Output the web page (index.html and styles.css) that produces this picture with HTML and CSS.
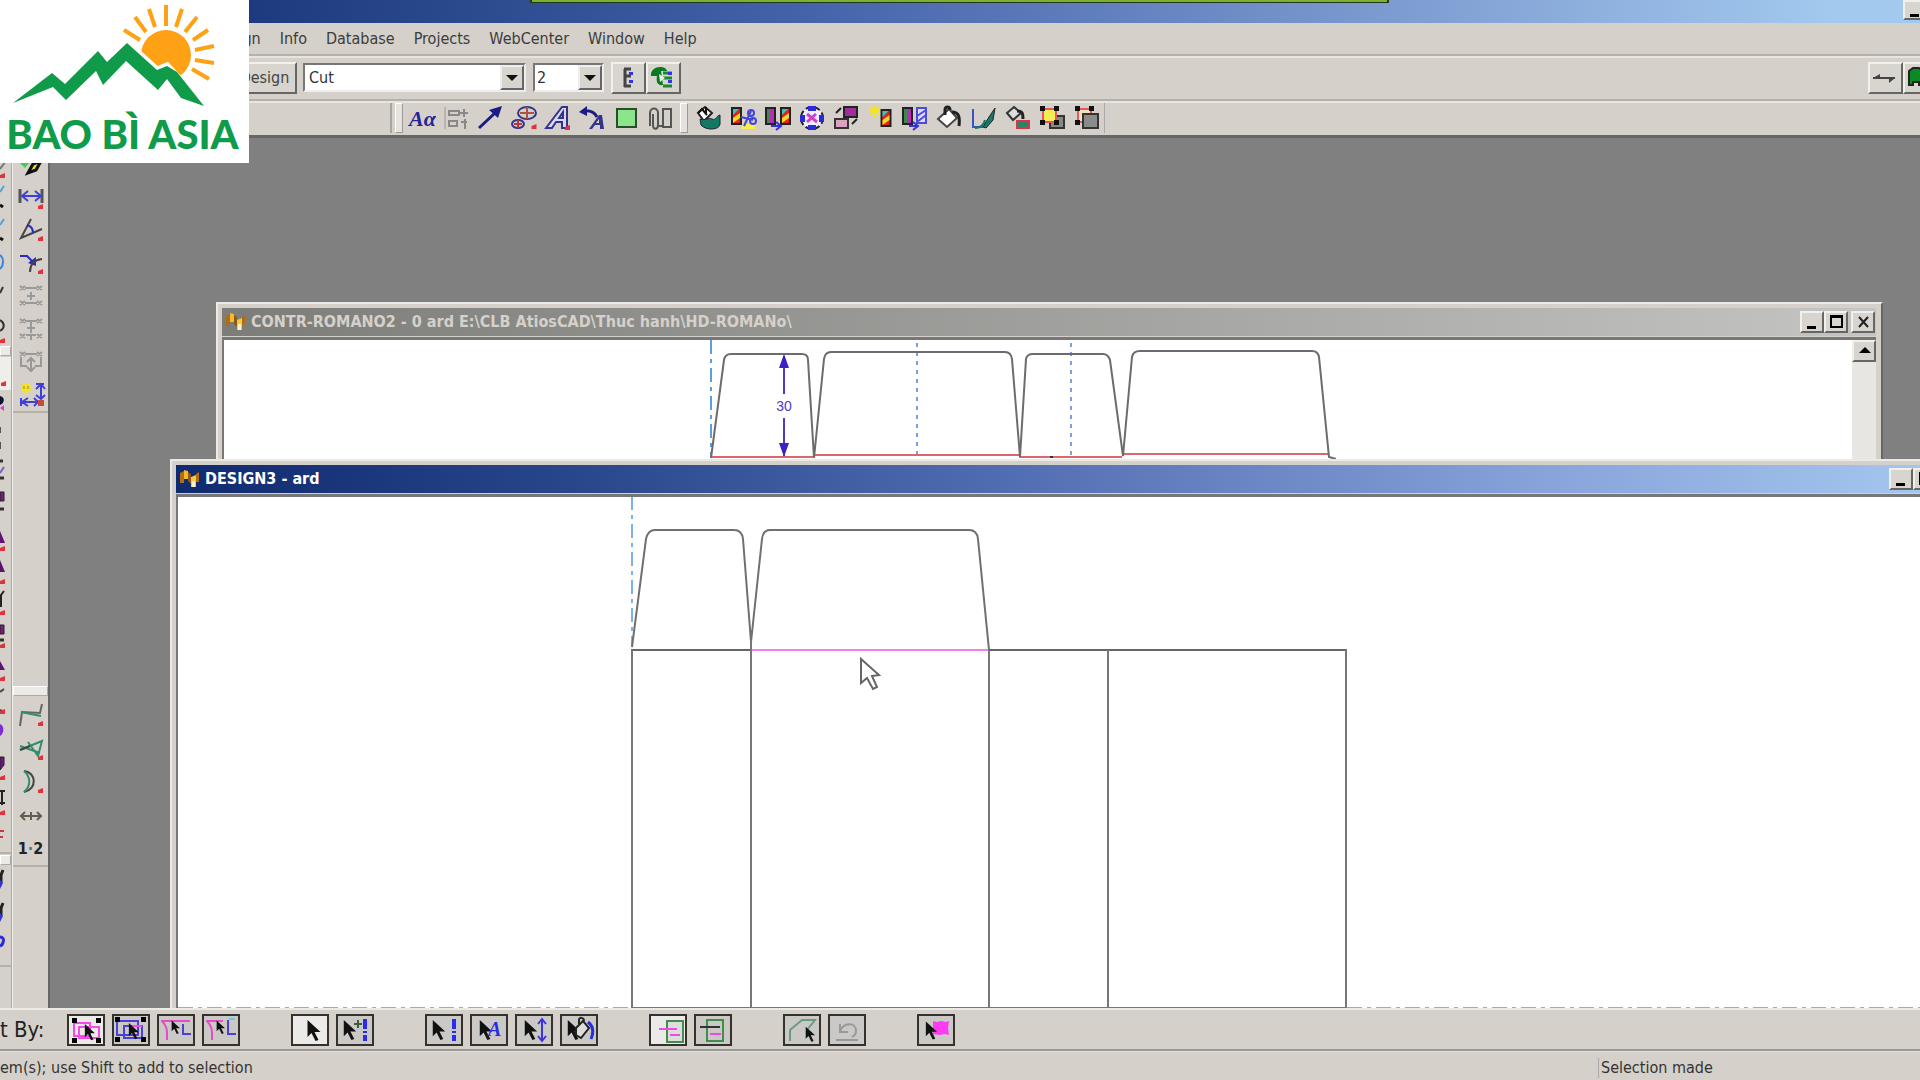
FILE: index.html
```html
<!DOCTYPE html>
<html lang="en">
<head>
<meta charset="utf-8">
<title>DESIGN3 - ard</title>
<link rel="stylesheet" href="styles.css">
</head>
<body>
<svg class="defs" aria-hidden="true">
  <symbol id="cur" viewBox="0 0 14 22"><path d="M1 0v17l4-4 4 8 3-1-4-8h6z" fill="#111"/></symbol>
  <symbol id="mark" viewBox="0 0 20 20"><path d="M0 4l4-2v12H0zM16 5l3-2v10h-3z" fill="#b06e14"/><path d="M4 1l4 1v8H4z" fill="#f5b92c"/><path d="M8 3l3 2v10l-3-3z" fill="#8a5a1c"/><path d="M11 8l5-2v12h-5z" fill="#f8c744"/><path d="M12 12h3v6h-3z" fill="#fff0c0"/></symbol>
  <symbol id="dot" viewBox="0 0 5 5"><path d="M5 0v5H0V2z" fill="#e0343c"/></symbol>
  <symbol id="card" viewBox="0 0 11 18"><path d="M1 1h9v16H1z" fill="#e2231a" stroke="#222" stroke-width="2"/><path d="M2 2h6L2 8z" fill="#35c3c3"/><path d="M9 6v5l-7 5v-5z" fill="#f8d820"/></symbol>
  <symbol id="plum" viewBox="0 0 11 18"><path d="M1 1h9v16H1z" fill="#b52cb5" stroke="#222" stroke-width="2"/><path d="M2 2h3v14H2z" fill="#3a8a4a"/></symbol>
</svg>

<div class="app">
  <header class="top">
    <div class="appbar">
      <span class="strip"></span>
      <div class="winbtns">
        <button class="wb" aria-label="Minimize"><svg width="22" height="20"><path d="M5 14h9v3H5z"/></svg></button>
      </div>
    </div>
    <nav class="menubar">
      <a href="#">Design</a><a href="#">Info</a><a href="#">Database</a><a href="#">Projects</a><a href="#">WebCenter</a><a href="#">Window</a><a href="#">Help</a>
    </nav>
    <div class="bar options">
      <button class="raised design">Design</button>
      <span class="combo wide"><select aria-label="Line type"><option>Cut</option></select><i></i></span>
      <span class="combo narrow"><select aria-label="Pointage"><option>2</option></select><i></i></span>
      <div class="pair">
        <button class="raised sq" aria-label="Line list"><svg width="30" height="28"><path d="M11 5h7M11 12h7M11 22h7M12 5v18" stroke="#444" stroke-width="3" fill="none"/><path d="M16 8h4v3h-4zM16 16h4v3h-4z" fill="#33e"/></svg></button>
        <button class="raised sq" aria-label="Line list refresh"><svg width="30" height="28"><path d="M3 12C2 1 18 1 19 7h-6l2 14C9 22 8 17 9 12z" fill="#0a7a22"/><path d="M15 9h9M15 14h9M15 22h9" stroke="#178a2c" stroke-width="3"/><path d="M11 10l6 4-5 4z" fill="#dff5df"/><path d="M20 8h4v3h-4zM20 16h4v3h-4z" fill="#33e"/></svg></button>
      </div>
      <div class="pair end">
        <button class="raised sq" aria-label="Swap"><svg width="30" height="28"><path d="M3 14h22" stroke="#444" stroke-width="2"/><path d="M3 14l7-4v4zM25 14l-6 5v-5z" fill="#444"/></svg></button>
        <button class="raised sq" aria-label="Part"><svg width="30" height="28"><path d="M4 7l4-3h6l4 3v14h-4v-3H8v3H4z" fill="#0a8a22" stroke="#222" stroke-width="2"/></svg></button>
      </div>
    </div>
    <div class="bar tools">
      <span class="rest"></span>
      <span class="grip"></span>
      <div class="set">
        <button aria-label="Text"><svg width="28" height="28"><text x="1" y="22" class="ga">Aα</text></svg></button>
        <button aria-label="Paragraph"><svg width="28" height="28"><path d="M3 3v22" stroke="#999" stroke-width="1"/><path d="M7 7h10v4H7zM7 17h8v5H7zM18 9h8M22 5v8M19 18h6M23 15v10" fill="none" stroke="#888" stroke-width="2"/></svg></button>
        <button aria-label="Leader"><svg width="28" height="28"><path d="M3 24L19 9" stroke="#1c1c84" stroke-width="3"/><path d="M26 2l-4 12-9-8z" fill="#1c1c84"/></svg></button>
        <button aria-label="Balloon"><svg width="28" height="28"><g fill="none" stroke-width="2"><ellipse cx="17" cy="9" rx="9" ry="6" stroke="#33358c"/><path d="M10 9h14M17 3v12" stroke="#b0523c"/><ellipse cx="8" cy="20" rx="6" ry="4" stroke="#33358c"/><path d="M4 20h8M8 16v8" stroke="#c4323c"/></g><use href="#dot" x="21" y="20" width="6" height="5"/></svg></button>
        <button aria-label="Outline text"><svg width="28" height="28"><path d="M2 24L18 3h5v21h-5v-6h-6l-4 6zM15 14h4V8z" fill="#d9d9f4" stroke="#34348c" stroke-width="2"/><use href="#dot" x="21" y="21" width="5" height="5"/></svg></button>
        <button aria-label="Text along arc"><svg width="28" height="28"><path d="M5 7c8-1 12 2 14 6" fill="none" stroke="#1c1c84" stroke-width="3"/><path d="M1 8l8-6v10z" fill="#1c1c84"/><path d="M11 25l10-14h3l2 14h-4v-4h-5l-3 4z" fill="#34348c"/><path d="M18 19h3v-4z" fill="#d5d1ca"/></svg></button>
        <button aria-label="Fill rectangle"><svg width="28" height="28"><path d="M5 5h19v18H5z" fill="#8be58b" stroke="#2c4c2c" stroke-width="2"/></svg></button>
        <button aria-label="Attach"><svg width="28" height="28"><path d="M4 22V9c0-6 8-6 8 0v12c0 5-5 5-5 0V10M17 5h8v18h-8zM12 22h5" fill="none" stroke="#555" stroke-width="2"/></svg></button>
      </div>
      <span class="grip"></span>
      <div class="set more">
        <button aria-label="Fill color"><svg width="28" height="28"><path d="M3 9l7-6 7 6-8 8z" fill="#fff" stroke="#222" stroke-width="2"/><path d="M5 15c6 2 8-2 12 0 4 2 5-4 8-4v9c0 6-14 7-19 1z" fill="#127a62" stroke="#223" stroke-width="1"/><path d="M11 3v6M3 9l4-4 5 6" stroke="#111" stroke-width="2" fill="none"/></svg></button>
        <button aria-label="Cut graphic"><svg width="28" height="28"><path d="M14 20h12v5H12z" fill="#f7ef4b"/><use href="#card" x="2" y="3" width="11" height="18"/><path d="M12 13l12 3M15 22l7-15" stroke="#4444dd" stroke-width="2"/><circle cx="22" cy="9" r="3" fill="none" stroke="#4444dd" stroke-width="2"/><circle cx="24" cy="17" r="3" fill="none" stroke="#4444dd" stroke-width="2"/></svg></button>
        <button aria-label="Copy graphic"><svg width="28" height="28"><use href="#plum" x="1" y="3" width="11" height="18"/><use href="#card" x="16" y="3" width="11" height="18"/><path d="M7 22h9M12 18l5 4-5 4" stroke="#33d" stroke-width="2" fill="none"/></svg></button>
        <button aria-label="Rotate graphic"><svg width="28" height="28"><circle cx="14" cy="14" r="11" fill="#eef" stroke="#222" stroke-width="2" stroke-dasharray="6 3"/><path d="M10 2h8v5h-8zM2 11h5v7H2zM21 11h5v7h-5zM10 21h8v5h-8z" fill="#2b2bdc"/><path d="M9 10l10 8M9 18l9-8" stroke="#d040c8" stroke-width="3"/></svg></button>
        <button aria-label="Scale graphic"><svg width="28" height="28"><path d="M12 3h13v10H12z" fill="#a02ca0" stroke="#222" stroke-width="2"/><path d="M3 15h13v9H3z" fill="#dba2c0" stroke="#333" stroke-width="2"/><path d="M4 9l5-5M20 20l5-5" stroke="#222" stroke-width="2"/></svg></button>
        <button aria-label="New graphic"><svg width="28" height="28"><path d="M3 3l9 8M12 3L3 11M7 2v11M2 7h11" stroke="#f2e428" stroke-width="2"/><use href="#card" x="13" y="5" width="12" height="18"/></svg></button>
        <button aria-label="Mirror graphic"><svg width="28" height="28"><use href="#plum" x="1" y="3" width="11" height="18"/><path d="M16 4h9v15h-9zM16 12l9-6M16 18l9-7" fill="#dcdcff" stroke="#4b4be0" stroke-width="2"/><path d="M8 22h8M12 18l5 4-5 4" stroke="#33d" stroke-width="2" fill="none"/></svg></button>
        <button aria-label="Paint"><svg width="28" height="28"><path d="M3 15L14 5l8 9-10 9z" fill="#fff" stroke="#444" stroke-width="2"/><path d="M10 11V6c0-4 5-4 5 0M17 8c7 0 8 5 7 14" fill="none" stroke="#222" stroke-width="3"/></svg></button>
        <button aria-label="Brush"><svg width="28" height="28"><path d="M3 5v18h10" stroke="#3656c4" stroke-width="2" fill="none"/><path d="M5 24c7 0 9-4 10-8" stroke="#127a62" stroke-width="2" fill="none"/><path d="M25 4l-6 9-6 10 3 1 7-8z" fill="#187a6a" stroke="#222" stroke-width="1"/></svg></button>
        <button aria-label="Bucket swatch"><svg width="28" height="28"><path d="M3 9l7-6 7 6-8 7z" fill="#ddd" stroke="#333" stroke-width="2"/><path d="M13 7c6 0 6 3 6 8" fill="none" stroke="#222" stroke-width="3"/><path d="M13 17h12v7H13z" fill="#2d8264" stroke="#d2384c" stroke-width="2"/></svg></button>
        <button aria-label="Bring forward"><svg width="28" height="28"><path d="M12 12h14v12H12z" fill="#888" stroke="#333" stroke-width="2"/><path d="M5 5h13v13H5z" fill="#f5ec54" stroke="#e2576a" stroke-width="2"/><path d="M2 2h5v5H2zM16 2h5v5h-5zM2 16h5v5H2zM16 16h5v5h-5z" fill="#111"/></svg></button>
        <button aria-label="Send backward"><svg width="28" height="28"><path d="M5 5h13v13H5z" fill="#f2e2b4" stroke="#e2576a" stroke-width="2"/><path d="M2 2h5v5H2zM16 2h5v5h-5zM2 16h5v5H2z" fill="#111"/><path d="M10 10h15v14H10z" fill="#8b8b8b" stroke="#333" stroke-width="2"/></svg></button>
      </div>
    </div>
    <div class="logo">
      <svg width="249" height="112" viewBox="0 0 249 112">
        <circle cx="166" cy="55" r="25" fill="#ffa114"/>
        <path d="M124 30l16 10M135 17l11 15M149 9l6 18M166 5v21M182 9l-6 18M197 17l-12 15M208 30l-15 10M214 46l-19 4M214 63l-19-3M209 79l-17-10" stroke="#ffa114" stroke-width="4"/>
        <path d="M98 51L107 62 127 43 157 70 167 66 204 106 167 78 158 90 126 61z" fill="#fff" stroke="#fff" stroke-width="7"/>
        <path d="M13 103L52 73 65 84 98 51 107 62 127 43 157 70 167 66 177 72 204 106 181 98 167 79 158 90 126 61 103 85 96 71 66 100 53 87z" fill="#0f9b49"/>
      </svg>
      <p>BAO BÌ ASIA</p>
    </div>
  </header>

  <main class="main">
    <aside class="palette">
      <div class="col cut">
        <div class="set">
          <button aria-label="Line"><svg width="11" height="33"><path d="M0 22l6-8" stroke="#777" stroke-width="2"/><use href="#dot" y="26" width="5" height="5"/></svg></button>
          <button aria-label="Arc"><svg width="11" height="33"><path d="M0 12l4-6" stroke="#4aa4dc" stroke-width="2"/><path d="M0 25l3 2" stroke="#111" stroke-width="3"/></svg></button>
          <button aria-label="Curve"><svg width="11" height="33"><path d="M0 12l4-6" stroke="#4aa4dc" stroke-width="2"/><path d="M0 25l3 2" stroke="#111" stroke-width="3"/></svg></button>
          <button aria-label="Circle"><svg width="11" height="33"><path d="M0 9c4 3 4 10 0 14" stroke="#3a86dc" stroke-width="2" fill="none"/></svg></button>
          <button aria-label="Offset"><svg width="11" height="33"><path d="M0 14l3-6" stroke="#333" stroke-width="2"/></svg></button>
          <button aria-label="Ellipse"><svg width="11" height="33"><path d="M0 8c5 3 5 8 0 11" stroke="#333" stroke-width="2" fill="none"/><use href="#dot" y="26" width="5" height="5"/></svg></button>
        </div>
        <span class="hgrip"></span>
        <div class="set">
          <button class="on" aria-label="Select"><svg width="11" height="33"><use href="#dot" x="1" y="24" width="5" height="5"/></svg></button>
          <button aria-label="Group"><svg width="11" height="33"><path d="M0 6c6 1 4 8 0 9z" fill="#113"/><path d="M0 18l4-3v6z" fill="#e03bd0"/></svg></button>
          <button aria-label="Move"><svg width="11" height="33"><path d="M0 4v6M0 19v7" stroke="#555" stroke-width="2"/></svg></button>
          <button aria-label="Copy"><svg width="11" height="33"><path d="M0 5h3M0 22h4" stroke="#333" stroke-width="3"/><path d="M0 17l4-6" stroke="#7b5cc4" stroke-width="2"/></svg></button>
          <button aria-label="Mirror"><svg width="11" height="33"><path d="M0 3h4v9H0z" fill="#7a1c7c" stroke="#222"/><path d="M0 20h4" stroke="#333" stroke-width="3"/></svg></button>
          <button aria-label="Rotate"><svg width="11" height="33"><path d="M0 9l5 12H0z" fill="#5c1470"/><use href="#dot" y="24" width="5" height="5"/></svg></button>
          <button aria-label="Scale"><svg width="11" height="33"><path d="M0 5l5 12H0z" fill="#5c1470"/><use href="#dot" y="24" width="5" height="5"/></svg></button>
          <button aria-label="Stretch"><svg width="11" height="33"><path d="M4 3L1 7v12" stroke="#222" stroke-width="2" fill="none"/><use href="#dot" y="22" width="5" height="5"/></svg></button>
          <button aria-label="Array"><svg width="11" height="33"><path d="M0 4h4v9H0z" fill="#7a1c7c" stroke="#222"/><path d="M0 19h4" stroke="#333" stroke-width="3"/><use href="#dot" y="22" width="5" height="5"/></svg></button>
          <button aria-label="Fillet"><svg width="11" height="33"><path d="M0 7l5 9H0z" fill="#5c1470"/><use href="#dot" y="22" width="5" height="5"/></svg></button>
          <button aria-label="Trim"><svg width="11" height="33"><path d="M0 5l4-3M0 23l4 2" stroke="#444" stroke-width="2"/><use href="#dot" y="22" width="5" height="5"/></svg></button>
          <button aria-label="Extend"><svg width="11" height="33"><path d="M0 4c5 2 4 10 0 12z" fill="#7c2cd0"/></svg></button>
          <button aria-label="Blend"><svg width="11" height="33"><path d="M0 4h4v8l-4 5z" fill="#6c1484" stroke="#222"/><use href="#dot" y="22" width="5" height="5"/></svg></button>
          <button aria-label="Dimension"><svg width="11" height="33"><path d="M2 5v14M0 5h5M0 17h5" stroke="#222" stroke-width="2"/><use href="#dot" y="24" width="5" height="5"/></svg></button>
          <button aria-label="Layer"><svg width="11" height="33"><path d="M0 12h4M0 18h3" stroke="#cc3444" stroke-width="2"/></svg></button>
        </div>
        <span class="hgrip"></span>
        <div class="set last">
          <button aria-label="View 1"><svg width="11" height="33"><path d="M3 4L1 9v8" stroke="#222" stroke-width="3"/><path d="M0 14l3 3-3 6z" fill="#33d"/></svg></button>
          <button aria-label="View 2"><svg width="11" height="33"><path d="M3 4L1 9v8" stroke="#222" stroke-width="3"/><path d="M0 14l3 3-3 6z" fill="#33d"/></svg></button>
          <button aria-label="View 3"><svg width="11" height="33"><path d="M0 5c6 0 3 8 0 9" stroke="#2b2bdc" stroke-width="3" fill="none"/></svg></button>
        </div>
      </div>
      <div class="col">
        <div class="set">
          <button aria-label="Extension"><svg width="30" height="30"><path d="M6 2h5v14H6z" fill="#3bd04a"/><path d="M4 14h9l-4 5z" fill="#3bd04a"/><path d="M25 12l-8 3-5 9 8-3z" fill="#e8dc2a" stroke="#111" stroke-width="3"/></svg></button>
          <button aria-label="Distance"><svg width="30" height="30"><path d="M4 7v14M26 7v14" stroke="#555" stroke-width="3"/><path d="M7 14h17M12 9l-6 5 6 5M19 9l6 5-6 5" stroke="#4040d8" stroke-width="2" fill="none"/><use href="#dot" x="22" y="22" width="5" height="5"/></svg></button>
          <button aria-label="Angle"><svg width="30" height="30"><path d="M15 4L5 23l21-9" stroke="#444" stroke-width="2" fill="none"/><path d="M11 10c4 1 6 4 6 8" stroke="#2b2bc0" stroke-width="2" fill="none"/><use href="#dot" x="22" y="21" width="5" height="5"/></svg></button>
          <button aria-label="Radius"><svg width="30" height="30"><path d="M4 8h7l7 7" stroke="#2b2bc0" stroke-width="2" fill="none"/><path d="M20 9v9l-8-3z" fill="#2b2bc0"/><path d="M26 11c-8 1-12 5-12 13" stroke="#444" stroke-width="2" fill="none"/><use href="#dot" x="22" y="21" width="5" height="5"/></svg></button>
          <button aria-label="Dimension align"><svg width="30" height="30"><path d="M4 5l5 4M9 5l-5 4M21 5l5 4M26 5l-5 4M9 7h12M4 20l5 4M9 20l-5 4M21 20l5 4M26 20l-5 4M9 22h12M11 15h8M15 11v8" stroke="#999" stroke-width="2"/></svg></button>
          <button aria-label="Dimension center"><svg width="30" height="30"><path d="M4 5l5 4M9 5l-5 4M21 5l5 4M26 5l-5 4M9 7h12M15 7v12M11 14h8M4 20l5 4M9 20l-5 4M21 20l5 4M26 20l-5 4M10 21h10M15 20v6" stroke="#999" stroke-width="2"/></svg></button>
          <button aria-label="Dimension move"><svg width="30" height="30"><path d="M4 5l5 4M9 5l-5 4M21 5l5 4M26 5l-5 4M9 7h12M5 10v9h6M25 10v9h-6M15 11v13M11 15l4-4 4 4M11 20l4 4 4-4" stroke="#999" stroke-width="2" fill="none"/></svg></button>
          <button aria-label="Auto dimension"><svg width="30" height="30"><circle cx="10" cy="8" r="5" fill="#f1e22c"/><path d="M8 6v3M12 6v3" stroke="#998a10"/><path d="M5 18v8M5 22h16M12 18l-6 4 6 4M18 18l4 4-4 4M20 4h8M25 4v14M20 9l5-5 4 5M20 15l5 4 4-4" stroke="#4040d8" stroke-width="2" fill="none"/><path d="M22 20h6v6h-6z" fill="#c8483c"/></svg></button>
        </div>
        <span class="fill"></span>
        <span class="hgrip"></span>
        <div class="set lower">
          <button aria-label="Bridge"><svg width="30" height="30"><path d="M4 24l2-14 18 1 2-9" stroke="#666" stroke-width="2" fill="none"/><path d="M5 10l20 4" stroke="#338c6c" stroke-width="2"/><use href="#dot" x="22" y="19" width="5" height="5"/></svg></button>
          <button aria-label="Nick"><svg width="30" height="30"><path d="M4 15l22-9-4 15-10-14M4 11l20 7" stroke="#338c6c" stroke-width="2" fill="none"/><path d="M4 15l10-4" stroke="#444" stroke-width="2"/><use href="#dot" x="22" y="20" width="5" height="5"/></svg></button>
          <button aria-label="Crescent"><svg width="30" height="30"><path d="M8 3c12 1 14 18 0 21" stroke="#444" stroke-width="2" fill="none"/><path d="M8 3c7 6 7 15 0 21" stroke="#338c6c" stroke-width="2" fill="none"/><use href="#dot" x="22" y="20" width="5" height="5"/></svg></button>
          <button aria-label="Split"><svg width="30" height="30"><path d="M4 15h22M9 11l-4 4 4 4M21 11l4 4-4 4M15 11v8" stroke="#665c50" stroke-width="2" fill="none"/></svg></button>
          <button class="seq"><span>1<b>·</b>2</span></button>
        </div>
      </div>
    </aside>

    <section class="desk">
      <article class="win back">
        <div class="titlebar">
          <svg width="20" height="20"><use href="#mark"/></svg>
          <h2>CONTR-ROMANO2 - 0 ard E:\CLB AtiosCAD\Thuc hanh\HD-ROMANo\</h2>
          <div class="winbtns">
            <button class="wb" aria-label="Minimize"><svg width="22" height="20"><path d="M5 14h9v3H5z"/></svg></button>
            <button class="wb" aria-label="Maximize"><svg width="22" height="20"><path d="M4 3h13v13H4zM6 6v8h9V6z" fill-rule="evenodd"/></svg></button>
            <button class="wb close" aria-label="Close"><svg width="22" height="20"><path d="M6 5l9 10M15 5L6 15" stroke="#222" stroke-width="2"/></svg></button>
          </div>
        </div>
        <div class="view">
          <svg class="canvas"><g transform="translate(-224 -340)" fill="none" stroke-width="2">
            <path d="M711 340v117" stroke="#5c9de0" stroke-dasharray="14 5 4 5"/>
            <path d="M917 343v112M1071 343v112" stroke="#7a9fdc" stroke-dasharray="4 5"/>
            <path d="M711 457h103M1019 457h103" stroke="#e0646a"/>
            <path d="M814 455h205M1122 454h207" stroke="#e0646a"/>
            <path d="M1050 457h3" stroke="#333"/>
            <path d="M711 458L724 360Q725 354 731 354H802Q808 354 808 360L814 458L824 359Q825 352 831 352H1005Q1011 352 1012 359L1020 457L1026 359Q1027 354 1033 354H1103Q1108 354 1110 360L1123 456L1132 357Q1133 351 1140 351H1312Q1318 351 1319 357L1329 457L1336 459" stroke="#6c6c6c"/>
            <path d="M784 356v38M784 418v38" stroke="#5038c8"/>
            <path d="M784 354l5 14h-10zM784 457l5-14h-10z" fill="#3a22c4"/>
            <text x="784" y="411" text-anchor="middle" class="dim">30</text>
          </g></svg>
          <div class="scroll"><button class="wb" aria-label="Scroll up"><svg width="22" height="20"><path d="M5 12l6-6 6 6z"/></svg></button></div>
        </div>
      </article>

      <article class="win front">
        <div class="titlebar">
          <svg width="20" height="20"><use href="#mark"/></svg>
          <h2>DESIGN3 - ard</h2>
          <div class="winbtns">
            <button class="wb" aria-label="Minimize"><svg width="22" height="20"><path d="M5 14h9v3H5z"/></svg></button>
            <button class="wb" aria-label="Maximize"><svg width="22" height="20"><path d="M4 3h13v13H4zM6 6v8h9V6z" fill-rule="evenodd"/></svg></button>
            <button class="wb close" aria-label="Close"><svg width="22" height="20"><path d="M6 5l9 10M15 5L6 15" stroke="#222" stroke-width="2"/></svg></button>
          </div>
        </div>
        <div class="view">
          <svg class="canvas"><g transform="translate(-178 -497)" fill="none" stroke-width="2">
            <path d="M632 496v150" stroke="#7cb2ea" stroke-dasharray="14 5 4 5"/>
            <path d="M178 1008h452M1347 1008h900" stroke="#8fb0d6" stroke-dasharray="15 5 4 5"/>
            <path d="M632 647L646 539Q648 530 655 530H734Q742 530 743 539L751 642L762 539Q763 530 770 530H969Q977 530 978 539L989 650" stroke="#707070"/>
            <path d="M631 650h120M989 650h357" stroke="#666"/>
            <path d="M632 650v357M751 640v367M989 650v357M1108 650v357M1346 649v358M631 1008h716" stroke="#777"/>
            <path d="M752 650h236" stroke="#ec82ec"/>
            <path d="M861 659v24l6-5 6 11 4-2-5-11 7-1z" fill="#fff" stroke="#666"/>
          </g></svg>
        </div>
      </article>
    </section>
  </main>

  <footer>
    <div class="selectby">
      <span class="label">t By:</span>
      <div class="grp">
        <button class="pick lit" aria-label="Group design"><svg width="34" height="28"><path d="M5 7h16v13H5zM10 11h20v11H10z" fill="none" stroke="#f24be8" stroke-width="2"/><path d="M3 2h5v5H3zM27 2h5v5h-5zM3 22h5v5H3zM27 22h5v5h-5z"/><use href="#cur" x="15" y="8" width="11" height="17"/></svg></button>
        <button class="pick" aria-label="Group line"><svg width="34" height="28"><path d="M3 5h21v14H3zM10 10h18v12H10z" fill="none" stroke="#4a40d8" stroke-width="2"/><path d="M15 10h13" stroke="#f24be8" stroke-width="2"/><path d="M1 1h5v5H1zM27 1h5v5h-5zM1 21h5v5H1zM27 21h5v5h-5z"/><use href="#cur" x="14" y="7" width="11" height="17"/></svg></button>
        <button class="pick" aria-label="Adjacent design"><svg width="34" height="28"><path d="M2 5h29M3 5c6 6 5 11 5 19" fill="none" stroke="#e84bc8" stroke-width="2"/><path d="M24 8v10h8" fill="none" stroke="#4a40d8" stroke-width="2"/><use href="#cur" x="12" y="4" width="9" height="15"/></svg></button>
        <button class="pick" aria-label="Adjacent line"><svg width="34" height="28"><path d="M2 5h17M3 5c6 6 5 11 5 19" fill="none" stroke="#e84bc8" stroke-width="2"/><path d="M24 4v14h8" fill="none" stroke="#4a40d8" stroke-width="2"/><path d="M25 3h6" stroke="#6dc8e8" stroke-width="2"/><use href="#cur" x="12" y="4" width="9" height="15"/></svg></button>
      </div>
      <div class="grp">
        <button class="pick lit" aria-label="Single"><svg width="34" height="28"><use href="#cur" x="13" y="4" width="15" height="22"/></svg></button>
        <button class="pick" aria-label="Add line"><svg width="34" height="28"><use href="#cur" x="4" y="4" width="15" height="21"/><path d="M16 8h8M20 4v8" stroke="#3c5c3c" stroke-width="2"/><path d="M27 3v22" stroke="#2a2af0" stroke-width="4" stroke-dasharray="10 2 2 2"/></svg></button>
      </div>
      <div class="grp">
        <button class="pick" aria-label="Lines"><svg width="34" height="28"><use href="#cur" x="4" y="4" width="15" height="21"/><path d="M27 3v22" stroke="#2a2af0" stroke-width="4" stroke-dasharray="10 2 2 2"/></svg></button>
        <button class="pick" aria-label="Texts"><svg width="34" height="28"><use href="#cur" x="6" y="4" width="15" height="21"/><text x="16" y="20" class="pa">A</text></svg></button>
        <button class="pick" aria-label="Dimensions"><svg width="34" height="28"><use href="#cur" x="6" y="4" width="15" height="21"/><path d="M25 4v20M21 8l4-5 4 5M21 20l4 5 4-5" fill="none" stroke="#3a34e0" stroke-width="2"/></svg></button>
        <button class="pick" aria-label="Fills"><svg width="34" height="28"><use href="#cur" x="4" y="4" width="15" height="21"/><path d="M14 12l7-7 6 7-8 10-5-3z" fill="#ddd" stroke="#222" stroke-width="2"/><path d="M26 6c5 4 6 10 3 17" fill="none" stroke="#2a2ae0" stroke-width="3"/><path d="M17 8V4c0-3 5-3 5 1" fill="none" stroke="#222" stroke-width="2"/></svg></button>
      </div>
      <div class="grp">
        <button class="pick lit" aria-label="Crossing"><svg width="34" height="28"><path d="M16 5h16v21H16z" fill="#ddd" stroke="#428c4c" stroke-width="2"/><path d="M8 13h18M19 19h10" stroke="#f04be0" stroke-width="2"/></svg></button>
        <button class="pick" aria-label="Inside"><svg width="34" height="28"><path d="M11 4h16v21H11z" fill="none" stroke="#428c4c" stroke-width="2"/><path d="M4 11h20" stroke="#333" stroke-width="2"/><path d="M14 18h11" stroke="#f04be0" stroke-width="2"/></svg></button>
      </div>
      <div class="grp">
        <button class="pick" aria-label="Polyline"><svg width="34" height="28"><path d="M5 25V14L17 4h13l-8 10" fill="none" stroke="#6a9c82" stroke-width="2"/><use href="#cur" x="20" y="10" width="10" height="17"/></svg></button>
        <button class="pick" aria-label="Undo selection"><svg width="34" height="28"><path d="M10 8v8h8M10 15c4-9 16-9 16 0 0 3-2 5-4 6M6 24h22" fill="none" stroke="#999" stroke-width="2"/></svg></button>
      </div>
      <div class="grp">
        <button class="pick" aria-label="Clear selection"><svg width="34" height="28"><path d="M14 5l4 1 4-1 5 1 3-1-1 7 1 7-4-1-5 1-7-1z" fill="#fb3cf0"/><use href="#cur" x="6" y="5" width="12" height="20"/></svg></button>
      </div>
    </div>
    <div class="status"><span>em(s); use Shift to add to selection</span><output>Selection made</output></div>
  </footer>
</div>
</body>
</html>
```
FILE: styles.css
```css
* { box-sizing: border-box; }
body { margin: 0; font: 16px/20px "DejaVu Sans Condensed", "DejaVu Sans", sans-serif; color: #333; background: #808080; overflow: hidden; }
button { margin: 0; padding: 0; border: 0; background: none; font: inherit; color: inherit; }
svg { display: block; }
.defs { position: absolute; width: 0; height: 0; }
.app { display: flex; flex-direction: column; height: 100vh; overflow: hidden; }

/* Header rows */
.top { position: relative; background: #d5d1ca; }
.appbar { position: relative; display: flex; height: 23px; margin-right: -7px; background: linear-gradient(90deg, #102a70, #28468a 22%, #4563aa 42%, #7c9bd0 72%, #a2c9ee 95%); }
.strip { position: absolute; left: 27.5%; right: 27.9%; top: 0; height: 3px; background: #7fae35; border: solid #1e3a18; border-width: 0 2px 1px; }
.winbtns { display: flex; align-items: center; margin-left: auto; }
.wb { display: flex; justify-content: center; align-items: center; width: 24px; height: 22px; background: #d8d5cf; border: 2px solid; border-color: #f2f0ec #666 #666 #f2f0ec; }
.wb.close { margin-left: 3px; }
.appbar .wb { height: 20px; align-self: flex-start; }
.menubar { display: flex; gap: 19px; height: 33px; padding: 6px 0 0 211px; border-bottom: 2px solid #b5b1a8; }
.menubar a { color: #3c3c3c; text-decoration: none; }
.bar { display: flex; align-items: center; border-top: 2px solid #e8e5df; }
.options { height: 45px; padding: 0 0 2px 232px; border-bottom: 2px solid #b5b1a8; }
.raised { height: 32px; background: #d8d5cf; border: 2px solid; border-color: #f2f0ec #666 #666 #f2f0ec; }
.design { width: 65px; color: #444; }
.combo { position: relative; display: flex; height: 29px; border: 2px solid; border-color: #777 #eee #eee #777; background: #fff; }
.wide { width: 223px; margin-left: 6px; }
.narrow { width: 71px; margin-left: 7px; }
.combo select { flex: 1; min-width: 0; padding: 0 0 0 4px; border: 0; appearance: none; background: #fff; font: inherit; color: #333; }
.narrow select { padding-left: 2px; }
.combo i { display: flex; justify-content: center; align-items: center; width: 24px; background: #d8d5cf; border: 2px solid; border-color: #eee #666 #666 #eee; pointer-events: none; }
.combo i::after { content: ""; border: 6px solid transparent; border-top-color: #111; border-bottom: 0; }
.pair { display: flex; margin-left: 7px; }
.pair.end { margin: 0 -18px 0 auto; }
.sq { width: 35px; }
.tools { height: 34px; padding-bottom: 2px; }
.rest { align-self: stretch; width: 392px; border-right: 2px solid #a9a59d; }
.grip { width: 8px; height: 30px; margin: 0 2px 0 3px; background: #e6e3de; border: 1px solid; border-color: #fff #999 #999 #fff; }
.set { display: flex; }
.tools .set button { width: 34px; height: 30px; display: grid; place-items: center; }
.tools .more { width: 415px; padding-left: 2px; border-right: 1px solid #aaa; }
.tools .more button { flex: 1; }
.ga { font: italic bold 22px "Liberation Serif", serif; fill: #24249a; }
.logo { position: absolute; left: 0; top: 0; z-index: 5; width: 249px; height: 163px; padding-right: 4px; background: #fff; }
.logo p { margin: 0; font: 900 40px/44px Lato, sans-serif; color: #0f9b49; text-align: center; white-space: nowrap; }

/* Palette columns */
.main { flex: 1; display: flex; min-height: 0; }
.palette { display: flex; width: 48px; background: #d5d1ca; }
.col { flex: 1; display: flex; flex-direction: column; padding-top: 12px; overflow: hidden; border-left: 1px solid #f2f0ec; }
.cut { flex: 0 0 12px; border-left: 0; border-right: 1px solid #aaa; }
.palette .set { flex-direction: column; border-bottom: 2px solid #b5b1a8; }
.palette .set button { display: grid; place-items: center; height: 33px; flex: none; }
.cut .set:first-child { border: 0; }
.cut .on { background: #f0eeea; }
.fill { flex: 0 1 272px; }
.hgrip { flex: none; height: 10px; margin: 1px 0; background: #eceae6; border: 1px solid; border-color: #fff #aaa #aaa #fff; }
.lower { padding-top: 3px; }
.seq { font-weight: bold; color: #222; }
.seq b { color: #338c6c; }

/* Workspace */
.desk { position: relative; flex: 1; overflow: hidden; background: #808080; border: solid #666; border-width: 3px 0 0 2px; }
.win { position: absolute; display: flex; flex-direction: column; background: #d5d1ca; border: 2px solid; border-color: #eceae5 #666 #666 #eceae5; padding: 4px 4px 0; }
.back { left: 166px; right: 37px; top: 164px; bottom: 80px; padding-right: 5px; }
.front { left: 120px; right: -51px; top: 321px; bottom: 0; border-bottom: 0; }
.titlebar { display: flex; align-items: center; gap: 5px; height: 28px; padding: 0 1px 0 4px; }
.titlebar h2 { margin: 0; font-size: 16px; line-height: 20px; white-space: pre; }
.back .titlebar { background: linear-gradient(90deg, #7c7c79, #c4c4c2); color: #d5d1ca; }
.front .titlebar { background: linear-gradient(90deg, #102a70, #28468a 22%, #4f6bb0 45%, #8aa6dc 78%, #a6caf0); color: #fff; }
.view { flex: 1; min-height: 0; display: flex; margin-top: 1px; background: #fff; border: 2px solid #777; border-width: 3px 0 0 2px; }
.canvas { flex: 1; min-width: 0; height: 100%; }
.scroll { width: 24px; background: #e8e6e3; }
.dim { font: 14px "Liberation Sans", sans-serif; fill: #5038c8; stroke: none; }

/* Selection bar and status line */
footer { background: #d5d1ca; }
.selectby { display: flex; align-items: center; gap: 51px; height: 43px; padding-top: 1px; border-top: 2px solid #eceae5; border-bottom: 2px solid #999; }
.label { width: 45px; margin-right: -29px; font-size: 22px; line-height: 24px; color: #222; white-space: nowrap; }
.grp { display: flex; gap: 7px; }
.pick { display: grid; place-items: center; width: 38px; height: 32px; background: #cbc9c6; border: 2px solid #33322c; }
.lit { background: #ebeae8; }
.pa { font: italic bold 20px "Liberation Serif", serif; fill: #2a2ae0; }
.status { display: flex; align-items: center; height: 29px; padding-top: 4px; border-top: 1px solid #e4e1db; }
.status output { margin-left: auto; width: 322px; padding-left: 2px; border-left: 1px solid #aaa; }
```
